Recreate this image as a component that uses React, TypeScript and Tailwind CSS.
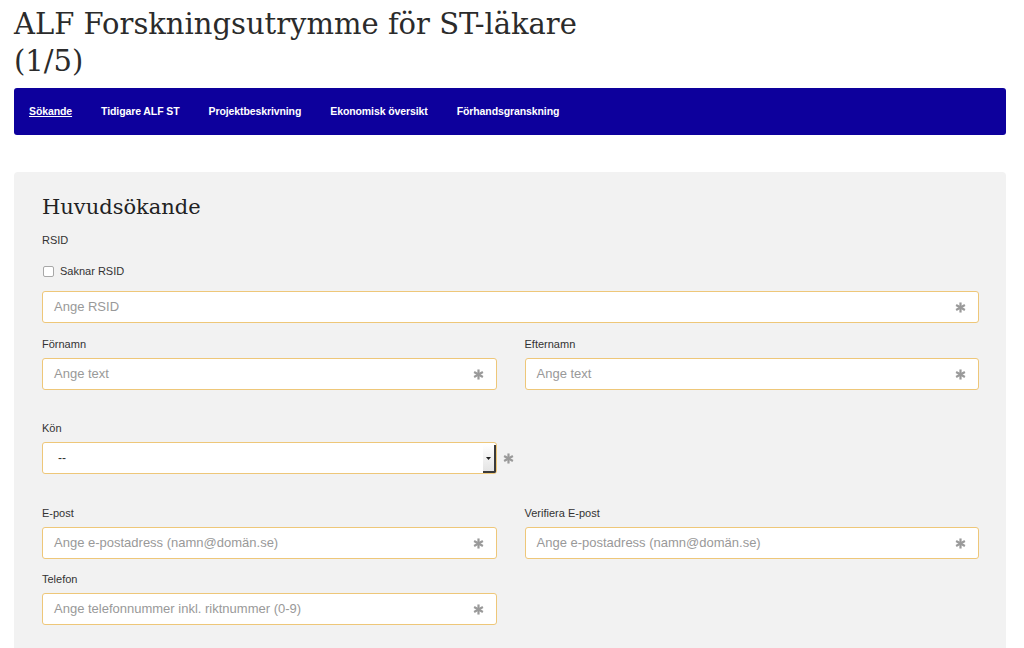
import React from "react";

const sans = { fontFamily: '"Liberation Sans", Arial, sans-serif' };

function Star({ className = "" }: { className?: string }) {
  return (
    <svg viewBox="0 0 12 12" width="11" height="11" className={className} aria-hidden>
      <g stroke="#9a9a9a" strokeWidth="2.4" strokeLinecap="butt">
        <line x1="6" y1="0.5" x2="6" y2="11.5" />
        <line x1="1.2" y1="3.2" x2="10.8" y2="8.8" />
        <line x1="1.2" y1="8.8" x2="10.8" y2="3.2" />
      </g>
    </svg>
  );
}

function Input({ placeholder }: { placeholder: string }) {
  return (
    <div className="h-[32px] bg-white border border-[#eec779] rounded-[3px] flex items-center justify-between pl-[11px] pr-[12px]">
      <span className="text-[13px] text-[#999999]">{placeholder}</span>
      <Star />
    </div>
  );
}

function Label({ children }: { children: React.ReactNode }) {
  return <div className="text-[11px] leading-[14px] text-[#333333] mb-[7px]">{children}</div>;
}

export default function App() {
  const nav = ["Sökande", "Tidigare ALF ST", "Projektbeskrivning", "Ekonomisk översikt", "Förhandsgranskning"];
  return (
    <div className="w-[1024px] h-[648px] overflow-hidden bg-white pl-[14px] pr-[18px]" style={sans}>
      <h1
        className="text-[#2b2b2b] text-[29px] leading-[37px] pt-[6px] font-normal w-[600px]"
        style={{ fontFamily: '"DejaVu Serif", Georgia, serif' }}
      >
        ALF Forskningsutrymme för ST-läkare
        <br />
        (1/5)
      </h1>
      <nav className="mt-[8px] h-[47px] bg-[#0d009c] rounded-[3px] flex items-center pl-[15px] gap-[29px]">
        {nav.map((n, i) => (
          <span
            key={n}
            className={`text-white text-[10.5px] font-bold tracking-[-0.1px] ${i === 0 ? "underline" : ""}`}
          >
            {n}
          </span>
        ))}
      </nav>
      <div className="mt-[37px] bg-[#f2f2f2] rounded-[4px] pl-[28px] pr-[27px] pt-[22px] pb-[30px]">
        <h2
          className="text-[21px] leading-[26px] text-[#222222] mb-[13px]"
          style={{ fontFamily: '"DejaVu Serif", Georgia, serif' }}
        >
          Huvudsökande
        </h2>
        <div className="text-[11px] leading-[14px] text-[#333333]">RSID</div>
        <div className="flex items-center mt-[17px] h-[14px]">
          <div className="w-[11px] h-[11px] ml-[1px] bg-white border border-[#a8a8a8] rounded-[2px]" />
          <span className="ml-[6px] text-[11px] text-[#333333]">Saknar RSID</span>
        </div>
        <div className="mt-[13px]">
          <Input placeholder="Ange RSID" />
        </div>
        <div className="mt-[14px] grid grid-cols-2 gap-x-[28px]">
          <div>
            <Label>Förnamn</Label>
            <Input placeholder="Ange text" />
          </div>
          <div>
            <Label>Efternamn</Label>
            <Input placeholder="Ange text" />
          </div>
        </div>
        <div className="mt-[31px] grid grid-cols-2 gap-x-[28px]">
          <div>
            <Label>Kön</Label>
            <div className="relative">
              <div className="h-[32px] bg-white border border-[#eec779] rounded-[3px] flex items-center pl-[15px] relative">
                <span className="text-[12px] text-[#333333]">--</span>
                <div className="absolute right-0 top-[2px] bottom-0 w-[13px] bg-gradient-to-b from-white to-[#e4e4e4] border-r-[2px] border-b-[2px] border-[#3a3a3a] rounded-br-[2px] flex items-center justify-center">
                  <svg width="5" height="3" viewBox="0 0 5 3">
                    <path d="M0 0 L5 0 L2.5 3 Z" fill="#222" />
                  </svg>
                </div>
              </div>
              <div className="absolute left-full top-0 h-[32px] ml-[6px] flex items-center">
                <Star />
              </div>
            </div>
          </div>
          <div />
        </div>
        <div className="mt-[32px] grid grid-cols-2 gap-x-[28px]">
          <div>
            <Label>E-post</Label>
            <Input placeholder="Ange e-postadress (namn@domän.se)" />
          </div>
          <div>
            <Label>Verifiera E-post</Label>
            <Input placeholder="Ange e-postadress (namn@domän.se)" />
          </div>
        </div>
        <div className="mt-[13px] grid grid-cols-2 gap-x-[28px]">
          <div>
            <Label>Telefon</Label>
            <Input placeholder="Ange telefonnummer inkl. riktnummer (0-9)" />
          </div>
          <div />
        </div>
      </div>
    </div>
  );
}
